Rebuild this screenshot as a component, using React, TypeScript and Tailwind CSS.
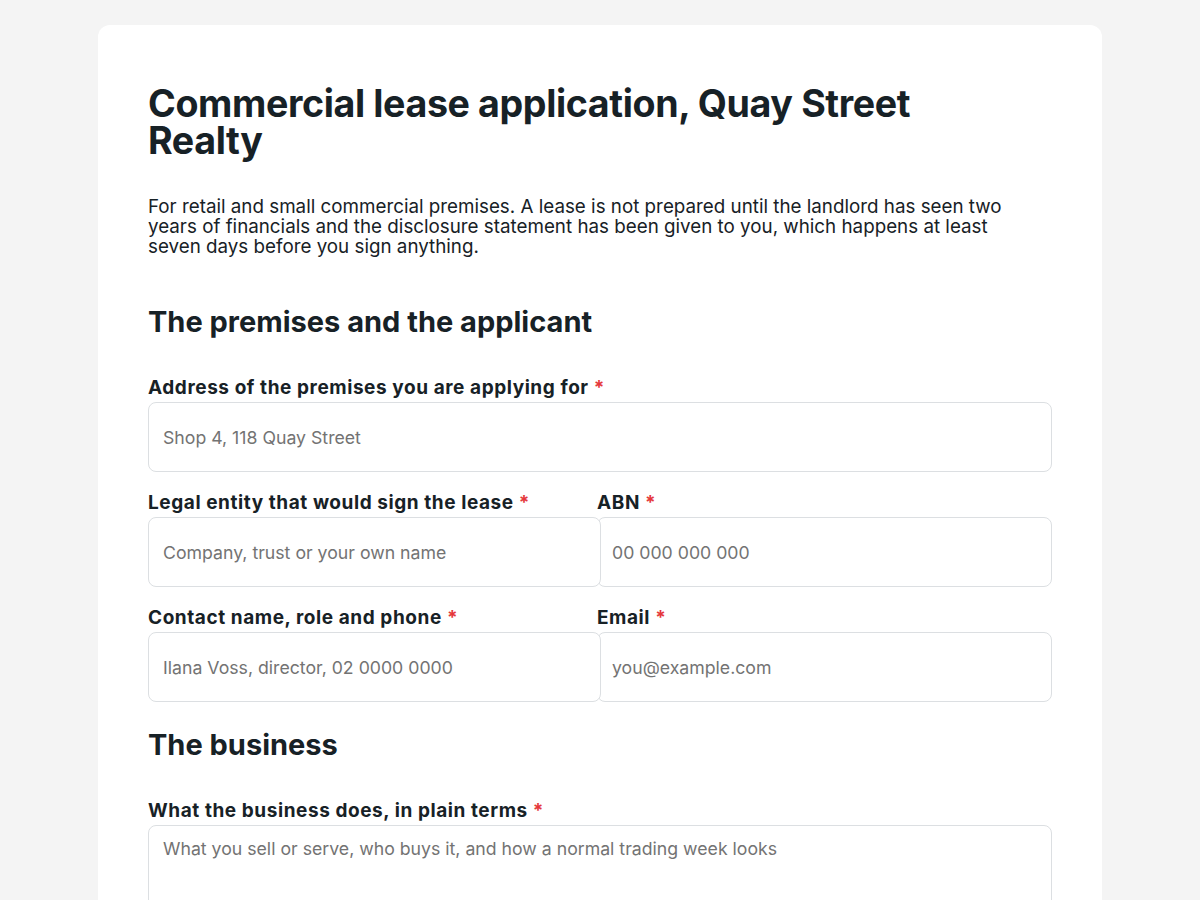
import React from "react";

const font = { fontFamily: "Inter, 'Noto Sans', sans-serif" };

function Label({ children }: { children: React.ReactNode }) {
  return (
    <label className="block text-[19px] leading-[24px] font-bold tracking-[0.03em] text-[#172126] mb-[2px]">
      {children} <span className="text-[#e5383b]">*</span>
    </label>
  );
}

function Field({
  label,
  placeholder,
  className = "",
  inputClass = "w-full",
}: {
  label: string;
  placeholder: string;
  className?: string;
  inputClass?: string;
}) {
  return (
    <div className={className}>
      <Label>{label}</Label>
      <input
        placeholder={placeholder}
        className={`${inputClass} h-[70px] rounded-lg border border-[#dcdfe2] bg-white px-[14px] text-[17.7px] text-[#172126] placeholder:text-[#737373] outline-none`}
      />
    </div>
  );
}

export default function App() {
  return (
    <div className="min-h-screen bg-[#f4f4f4] pt-[25px]" style={font}>
      <div className="mx-auto w-[1004px] rounded-xl bg-white px-[50px] pt-[60px] pb-12 min-h-[900px]">
        <h1 className="max-w-[820px] text-[37.6px] leading-[37px] font-bold tracking-[-0.01em] text-[#172126]">
          Commercial lease application, Quay Street Realty
        </h1>
        <p className="mt-[38px] max-w-[880px] text-[18.8px] leading-[20px] text-[#172126]">
          For retail and small commercial premises. A lease is not prepared until the landlord has seen two
          years of financials and the disclosure statement has been given to you, which happens at least
          seven days before you sign anything.
        </p>

        <h2 className="mt-[48px] text-[29px] leading-[34px] font-bold text-[#172126]">
          The premises and the applicant
        </h2>
        <div className="mt-[37px] flex flex-col gap-[19px]">
          <Field label="Address of the premises you are applying for" placeholder="Shop 4, 118 Quay Street" />
          <div className="grid grid-cols-[449px_1fr]">
            <Field
              label="Legal entity that would sign the lease"
              placeholder="Company, trust or your own name"
              inputClass="w-[453px] relative"
            />
            <Field label="ABN" placeholder="00 000 000 000" />
          </div>
          <div className="grid grid-cols-[449px_1fr]">
            <Field
              label="Contact name, role and phone"
              placeholder="Ilana Voss, director, 02 0000 0000"
              inputClass="w-[453px] relative"
            />
            <Field label="Email" placeholder="you@example.com" />
          </div>
        </div>

        <h2 className="mt-[26px] text-[29px] leading-[34px] font-bold text-[#172126]">The business</h2>
        <div className="mt-[37px]">
          <Label>What the business does, in plain terms</Label>
          <textarea
            placeholder="What you sell or serve, who buys it, and how a normal trading week looks"
            className="block w-full h-[140px] resize-none rounded-lg border border-[#dcdfe2] bg-white px-[14px] py-[12px] text-[17.7px] leading-[22px] text-[#172126] placeholder:text-[#737373] outline-none"
          />
        </div>
      </div>
    </div>
  );
}
